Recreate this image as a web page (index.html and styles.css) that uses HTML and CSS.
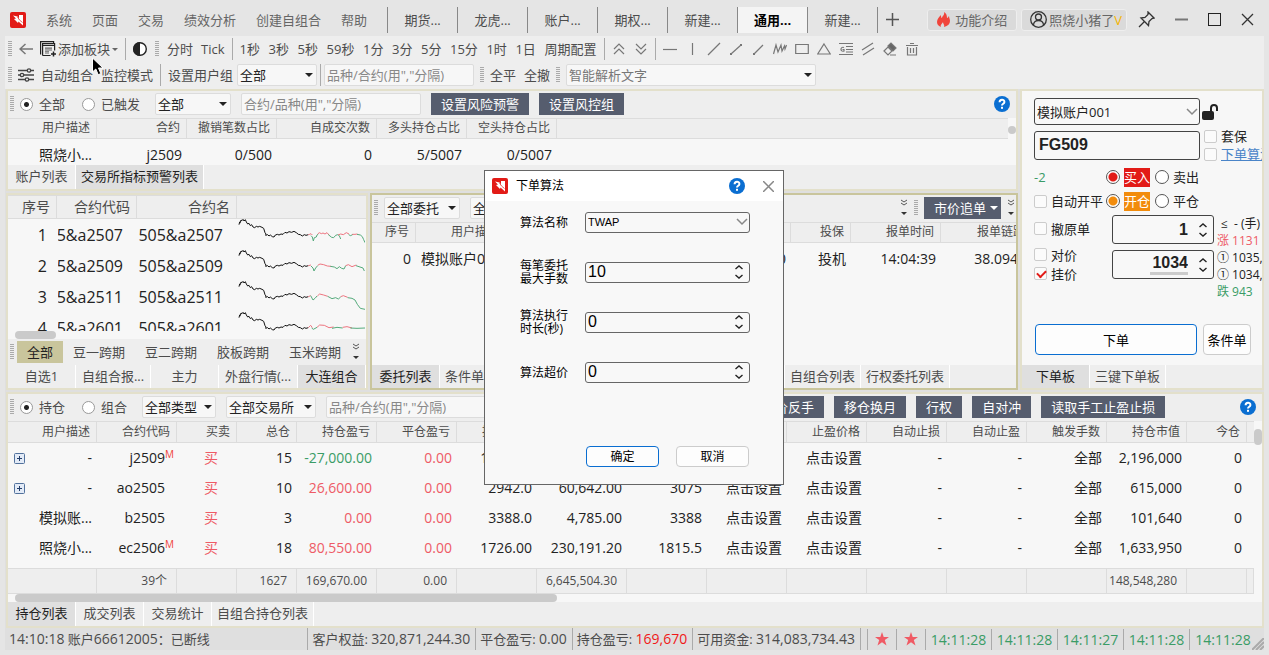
FILE: index.html
```html
<!DOCTYPE html>
<html lang="zh-CN">
<head>
<meta charset="utf-8">
<title>通用交易</title>
<link rel="stylesheet" href="styles.css">
</head>
<body>
<svg class="defs" aria-hidden="true">
  <symbol id="logo" viewBox="0 0 16 16"><rect width="16" height="16" rx="2" fill="#e21b17"/><path d="M3 3.500l4.500 1L9 6.500V3h4v10.500L8.500 9.500l-.500 1.500L4 7l2-.500z" fill="#fff"/><path d="M7.500 5l2 3 3 2.500" stroke="#e21b17" stroke-width=".7" fill="none"/></symbol>
  <symbol id="help" viewBox="0 0 16 16"><circle cx="8" cy="8" r="8" fill="#0a6ed1"/><path d="M5.600 6.200C5.600 3 10.400 3 10.400 5.900c0 2-2.400 1.800-2.400 3.700" fill="none" stroke="#fff" stroke-width="2"/><rect x="7" y="10.800" width="2" height="2" fill="#fff"/></symbol>
  <symbol id="more" viewBox="0 0 8 18"><path d="M1 1l3 2 3-2M1 4l3 2 3-2" fill="none" stroke="#555" stroke-width="1"/><path d="M1 13h6l-3 3z" fill="#333"/></symbol>
  <symbol id="chev" viewBox="0 0 12 8"><path d="M1 1l5 5 5-5" fill="none" stroke="#888" stroke-width="1.500"/></symbol>
  <symbol id="steps" viewBox="0 0 10 14"><path d="M1.500 4L5 1l3.500 3M1.500 10L5 13l3.500-3" fill="none" stroke="#222" stroke-width="1.400"/></symbol>
  <symbol id="plus" viewBox="0 0 11 11"><rect x=".5" y=".5" width="10" height="10" rx="1" fill="#e3ebf7" stroke="#51719c"/><path d="M3 5.500h5M5.500 3v5" stroke="#243f6b"/></symbol>
  <symbol id="star" viewBox="0 0 14 14"><path d="M7 0l1.700 5H14L9.800 8.100l1.700 5.300L7 10.300l-4.500 3.100 1.700-5.300L0 5h5.300z" fill="#f05a64"/></symbol>
  <symbol id="trend" viewBox="0 0 384 93"><polyline points="6,17 8,9 10,11 12,3 15,5 18,1 21,6 25,2 28,9 32,15 36,13 40,20 44,17 48,24 53,26 58,22 63,24 68,22 75,25 80,28 84,41 87,45 86,49 92,47 96,51 100,48 106,53 111,54 115,48 121,46 126,48 132,45 138,46 144,40 150,42 156,38 164,40 171,37 178,41 184,46 190,47 196,51 202,47 207,49 214,47" fill="none" stroke="#111" stroke-width="3"/></symbol>
</svg>

<header class="titlebar">
  <svg class="i16 logo"><use href="#logo"/></svg>
  <nav class="menu"><a href="#">系统</a><a href="#">页面</a><a href="#">交易</a><a href="#">绩效分析</a><a href="#">创建自组合</a><a href="#">帮助</a></nav>
  <nav class="pages"><a href="#">期货...</a><a href="#">龙虎...</a><a href="#">账户...</a><a href="#">期权...</a><a href="#">新建...</a><a href="#" class="on">通用...</a><a href="#">新建...</a></nav>
  <button class="icon add" aria-label="添加页面"><svg width="13" height="13"><path d="M0 6.500h13M6.500 0v13" stroke="#555" stroke-width="1.500"/></svg></button>
  <div class="window-tools">
    <button class="pill"><svg width="13" height="15" viewBox="0 0 13 15"><path d="M7 0c1 3-2 4-2 6C4 6 4 4 4 3 2 5 0 7 0 10c0 3 2 4 4 5-1-2 1-3 2-5 0 2 2 3 1 5 4-1 6-3 6-6 0-2-1-3-1-5-1 1-1 2-2 2 0-3-1-5-3-6z" fill="#f0443a"/></svg>功能介绍</button>
    <button class="pill user"><svg width="17" height="17" viewBox="0 0 17 17" fill="none" stroke="#333" stroke-width="1.300"><circle cx="8.500" cy="8.500" r="7.800"/><circle cx="8.500" cy="6" r="3"/><path d="M3.500 14c0-6 10-6 10 0"/></svg>照烧小猪了<b>V</b></button>
    <button class="icon" aria-label="固定"><svg width="17" height="17" viewBox="0 0 17 17" fill="none" stroke="#333" stroke-width="1.300"><path d="M10 1l6 6-2 .500-3 3-.500 4-7.500-7.500L7 6.500l3-3zM6.500 10.500L1 16"/></svg></button>
    <button class="icon" aria-label="最小化"><svg width="13" height="13"><path d="M0 6.500h13" stroke="#777" stroke-width="2"/></svg></button>
    <button class="icon" aria-label="最大化"><svg width="13" height="13"><rect x=".5" y=".5" width="12" height="12" fill="none" stroke="#222"/></svg></button>
    <button class="icon" aria-label="关闭"><svg width="13" height="13"><path d="M1 1l11 11M12 1L1 12" stroke="#333" stroke-width="1.300"/></svg></button>
  </div>
</header>

<main class="workspace">
  <div class="bar top">
    <i class="grip"></i>
    <button class="icon back" aria-label="后退"><svg width="14" height="12"><path d="M14 6H1M6.500 1L1 6l5.500 5" fill="none" stroke="#777" stroke-width="1.500"/></svg></button>
    <button class="tool block"><svg width="16" height="16" viewBox="0 0 16 16" fill="none" stroke="#222"><path d="M5 6h7v4H9v3H5z" fill="#aaa" stroke="none"/><path d="M.6 13.500V.600h13v2M2.600 14.500V2.600h12v7M2.600 4.500h12M2.600 14.500h8" stroke-width="1.200"/><path d="M5 7.500h7M5 10.500h4" stroke="#888"/><path d="M13.500 10.500v5M11 13h5" stroke-width="1.500"/></svg>添加板块<i class="caret small"></i></button>
    <i class="sep"></i>
    <button class="icon contrast" aria-label="主题"><svg width="14" height="14"><circle cx="7" cy="7" r="6.300" fill="#fff" stroke="#222" stroke-width="1.400"/><path d="M7 0a7 7 0 0 0 0 14z" fill="#222"/></svg></button>
    <i class="grip"></i>
    <button class="tool">分时</button><button class="tool">Tick</button>
    <i class="sep"></i>
    <div class="times"><button>1秒</button><button>3秒</button><button>5秒</button><button>59秒</button><button>1分</button><button>3分</button><button>5分</button><button>15分</button><button>1时</button><button>1日</button><button>周期配置</button></div>
    <i class="sep"></i>
    <div class="draws">
      <button class="icon" aria-label="上移"><svg width="14" height="14" viewBox="0 0 14 14"><path d="M2 7l5-5 5 5M2 12l5-5 5 5"/></svg></button>
      <button class="icon" aria-label="下移"><svg width="14" height="14" viewBox="0 0 14 14"><path d="M2 2l5 5 5-5M2 7l5 5 5-5"/></svg></button>
    </div>
    <i class="sep"></i>
    <div class="draws">
      <button class="icon" aria-label="水平线"><svg width="14" height="14" viewBox="0 0 14 14"><path d="M0 7.500h14"/></svg></button>
      <button class="icon" aria-label="垂直线"><svg width="14" height="14" viewBox="0 0 14 14"><path d="M7.500 1v12"/></svg></button>
      <button class="icon" aria-label="直线"><svg width="14" height="14" viewBox="0 0 14 14"><path d="M1 13L13 1"/></svg></button>
      <button class="icon" aria-label="线段"><svg width="14" height="14" viewBox="0 0 14 14"><path d="M2 12L12 3"/><path d="M1 12h2M11 3h2" stroke-width="2"/></svg></button>
      <button class="icon" aria-label="射线"><svg width="14" height="14" viewBox="0 0 14 14"><path d="M3 12l9-9"/><path d="M2 12h2" stroke-width="2"/></svg></button>
      <button class="icon" aria-label="波浪线"><svg width="14" height="14" viewBox="0 0 14 14"><path d="M.5 12L3 3l2 7 3-7 1 6 2.500-5 .500 3 1.500-4"/></svg></button>
      <button class="icon" aria-label="矩形"><svg width="14" height="14" viewBox="0 0 14 14"><path d="M.7 2.500h12.600v9H.700z"/></svg></button>
      <button class="icon" aria-label="三角形"><svg width="14" height="14" viewBox="0 0 14 14"><path d="M7 2l6.300 10H.700z"/></svg></button>
      <button class="icon" aria-label="黄金分割"><svg width="14" height="14" viewBox="0 0 14 14"><path d="M0 1.500h14M7 4.500h7M7 7.500h7M7 10h7M0 12.500h14M5 5.500C1 4 1 10.500 5 9V7.500H3.500"/></svg></button>
      <button class="icon" aria-label="平行线"><svg width="14" height="14" viewBox="0 0 14 14"><path d="M1 8L12 1M2 13L13 6"/></svg></button>
      <button class="icon" aria-label="橡皮"><svg width="14" height="14" viewBox="0 0 14 14"><path d="M1 9l4-4 4 4-4 4zM7 13h6"/><path d="M5 4l3-3 5 5-3 3z" fill="#666"/></svg></button>
      <button class="icon" aria-label="删除"><svg width="14" height="14" viewBox="0 0 14 14"><path d="M1 3.500h12M5 1.500h4M2.500 5v8h9V5M5.500 6v5M8.500 6v5"/></svg></button>
    </div>
  </div>
  <div class="bar second">
    <i class="grip"></i>
    <button class="tool slid"><svg width="16" height="14" viewBox="0 0 16 14" fill="#eee" stroke="#444" stroke-width="1.300"><path d="M0 2.500h16M0 7h16M0 11.500h16"/><circle cx="11" cy="2.500" r="1.700"/><circle cx="4" cy="7" r="1.700"/><circle cx="9" cy="11.500" r="1.700"/></svg>自动组合</button>
    <button class="tool">监控模式</button>
    <i class="sep"></i>
    <label class="tool" for="group">设置用户组</label>
    <span class="drop w80"><select id="group"><option>全部</option></select></span>
    <i class="sep tight"></i>
    <input class="field w150" aria-label="品种筛选" placeholder='品种/合约(用","分隔)'>
    <i class="grip mid"></i>
    <button class="tool">全平</button><button class="tool">全撤</button>
    <i class="grip mid"></i>
    <span class="drop w250 dim"><select aria-label="智能解析"><option>智能解析文字</option></select></span>
  </div>

  <div class="docks">
    <div class="left">
      <section class="panel">
        <div class="bar">
          <i class="grip"></i>
          <label class="choice"><input type="radio" name="warn" checked>全部</label>
          <label class="choice"><input type="radio" name="warn">已触发</label>
          <span class="drop w76"><select aria-label="范围"><option>全部</option></select></span>
          <input class="field w180" aria-label="合约筛选" placeholder='合约/品种(用","分隔)'>
          <button class="dark">设置风险预警</button><button class="dark">设置风控组</button>
          <button class="icon end" aria-label="帮助"><svg class="i16"><use href="#help"/></svg></button>
        </div>
        <div class="scroll-y">
          <table class="grid warn">
            <colgroup><col class="c89"><col class="c90"><col class="c90"><col class="c100"><col class="c90"><col class="c90"><col></colgroup>
            <thead><tr><th>用户描述</th><th>合约</th><th>撤销笔数占比</th><th>自成交次数</th><th>多头持仓占比</th><th>空头持仓占比</th><th></th></tr></thead>
            <tbody><tr><td>照烧小...</td><td>j2509</td><td>0/500</td><td>0</td><td>5/5007</td><td>0/5007</td><td></td></tr></tbody>
          </table>
          <div class="track"><i class="dot"></i></div>
        </div>
        <nav class="tabs"><a href="#">账户列表</a><a href="#" class="on">交易所指标预警列表</a></nav>
      </section>

      <div class="pair">
        <section class="panel quotes">
          <div class="quote-view">
          <table class="grid big">
            <colgroup><col class="c49"><col class="c80"><col class="c100"><col></colgroup>
            <thead><tr><th>序号</th><th>合约代码</th><th>合约名</th><th></th></tr></thead>
            <tbody>
              <tr><td>1</td><td><div class="clip">5&amp;a2507</div></td><td>505&amp;a2507</td><td class="chart"><svg viewBox="0 0 384 93"><use href="#trend"/><polyline class="r" points="214,47 218,46 222,44 226,48"/><polyline class="g" points="222,50 226,54 229,66 232,56 238,54 240,48 244,45"/><polyline class="r" points="242,45 247,41 253,44 258,42 264,45 270,41 276,48"/><polyline class="g" points="274,47 279,51 284,55 290,56 296,49 302,47 307,50 311,60"/><polyline class="r" points="303,48 311,45 319,47 328,41 336,45"/><polyline class="g" points="335,47 341,50 348,46"/><polyline class="r" points="346,46 354,46 361,45"/><polyline class="g" points="360,46 370,48 376,53 380,62 384,71"/></svg></td></tr>
              <tr><td>2</td><td><div class="clip">5&amp;a2509</div></td><td>505&amp;a2509</td><td class="chart"><svg viewBox="0 0 384 93"><use href="#trend"/><polyline class="r" points="214,47 222,45"/><polyline class="g" points="222,48 228,54 231,63 236,54 242,47"/><polyline class="r" points="242,46 249,42 260,44 271,48 282,49"/><polyline class="g" points="280,49 292,51 300,56 307,50 314,55 321,57 326,47"/><polyline class="r" points="326,47 334,44 345,50 358,45"/><polyline class="g" points="357,47 369,51 378,54 382,63"/></svg></td></tr>
              <tr><td>3</td><td><div class="clip">5&amp;a2511</div></td><td>505&amp;a2511</td><td class="chart"><svg viewBox="0 0 384 93"><use href="#trend"/><polyline class="r" points="214,47 221,44"/><polyline class="g" points="221,44 228,57 234,52 240,45"/><polyline class="r" points="241,45 248,39 260,42 272,46"/><polyline class="g" points="272,46 285,53 296,50 304,54 311,48"/><polyline class="r" points="311,47 319,44 332,49"/><polyline class="g" points="332,50 345,52 354,57 361,70 370,82 384,85"/></svg></td></tr>
              <tr><td>4</td><td><div class="clip">5&amp;a2601</div></td><td>505&amp;a2601</td><td class="chart"><svg viewBox="0 0 384 93"><use href="#trend"/><polyline class="r" points="214,47 221,40 226,47"/><polyline class="g" points="224,48 229,52 240,46"/><polyline class="r" points="240,46 248,39 262,40 276,47 290,45"/><polyline class="g" points="285,49 300,46 317,48"/><polyline class="r" points="317,46 330,44 345,48"/><polyline class="g" points="340,48 360,49 384,48"/></svg></td></tr>
            </tbody>
          </table>
          </div>
          <div class="hscroll"><i class="short"></i></div>
          <div class="bar cats"><i class="grip"></i><button class="cat on">全部</button><button class="cat">豆一跨期</button><button class="cat">豆二跨期</button><button class="cat">胶板跨期</button><button class="cat">玉米跨期</button><svg class="more end"><use href="#more"/></svg></div>
          <nav class="tabs wide"><a href="#">自选1</a><a href="#">自组合报...</a><a href="#">主力</a><a href="#">外盘行情(...</a><a href="#" class="on">大连组合</a></nav>
        </section>

        <section class="panel active">
          <div class="bar">
            <i class="grip"></i>
            <span class="drop w76"><select aria-label="委托"><option>全部委托</option></select></span>
            <span class="drop w76"><select aria-label="类型"><option>全部类型</option></select></span>
            <svg class="more end"><use href="#more"/></svg>
            <i class="grip"></i>
            <button class="dark split">市价追单<i class="caret"></i></button>
            <svg class="more"><use href="#more"/></svg>
          </div>
          <div class="order-view">
          <table class="grid orders">
            <colgroup><col class="c44"><col class="c90"><col class="c80"><col class="c60"><col class="c60"><col class="c85"><col class="c60"><col class="c90"><col class="c90"></colgroup>
            <thead><tr><th>序号</th><th>用户描述</th><th>合约</th><th>买卖</th><th>开平</th><th>报单价格</th><th>投保</th><th>报单时间</th><th>报单链路</th></tr></thead>
            <tbody><tr><td>0</td><td>模拟账户001</td><td>FG509</td><td>买</td><td>开仓</td><td>1034.00</td><td>投机</td><td>14:04:39</td><td>38.0947</td></tr></tbody>
          </table>
          </div>
          <nav class="tabs"><a href="#" class="on">委托列表</a><a href="#">条件单列表</a><a href="#">止盈止损触发单列表</a><a href="#">套利与互换委托单列表</a><a href="#">自组合列表</a><a href="#">行权委托列表</a></nav>
        </section>
      </div>
    </div>

    <section class="panel trade">
      <form class="ticket">
        <div class="line first">
          <span class="box acct"><select aria-label="账户"><option>模拟账户001</option></select><svg class="chev"><use href="#chev"/></svg></span>
          <svg width="17" height="16" viewBox="0 0 17 16"><rect y="7" width="12" height="9" rx="2" fill="#222"/><path d="M9 8V4c0-4 6-4 6 0v3" fill="none" stroke="#222" stroke-width="2"/></svg>
        </div>
        <div class="line code">
          <input class="box symbol" aria-label="合约" value="FG509">
          <div class="stack"><label><input type="checkbox">套保</label><label><input type="checkbox"><a href="#">下单算法</a></label></div>
        </div>
        <div class="line sides"><span class="net">-2</span><label><input type="radio" name="side" class="red" checked><mark class="buy">买入</mark></label><label><input type="radio" name="side">卖出</label></div>
        <div class="line sides"><label class="auto"><input type="checkbox">自动开平</label><label><input type="radio" name="off" class="orange" checked><mark class="open">开仓</mark></label><label><input type="radio" name="off">平仓</label></div>
        <div class="entry">
          <div class="opts"><label class="lone"><input type="checkbox">撤原单</label><label><input type="checkbox">对价</label><label><input type="checkbox" checked>挂价</label></div>
          <div class="nums">
            <span class="box num"><input type="number" aria-label="手数" value="1"><svg class="steps"><use href="#steps"/></svg></span>
            <span class="box num"><input type="number" class="marked" aria-label="价格" value="1034"><svg class="steps"><use href="#steps"/></svg></span>
          </div>
          <div class="hints"><span class="first-hint">≤&nbsp; - (手)</span><span class="up">涨 1131</span><span>① 1035,25</span><span>① 1034,18</span><span class="down">跌 943</span></div>
        </div>
        <div class="line actions"><button type="button" class="push main">下单</button><button type="button" class="push">条件单</button></div>
      </form>
      <nav class="tabs"><a href="#" class="on">下单板</a><a href="#">三键下单板</a></nav>
    </section>
  </div>

  <section class="panel positions">
    <div class="bar">
      <i class="grip"></i>
      <label class="choice"><input type="radio" name="pos" checked>持仓</label>
      <label class="choice"><input type="radio" name="pos">组合</label>
      <span class="drop w74"><select aria-label="类型"><option>全部类型</option></select></span>
      <span class="drop w90"><select aria-label="交易所"><option>全部交易所</option></select></span>
      <input class="field w170" aria-label="持仓筛选" placeholder='品种/合约(用","分隔)'>
      <button class="dark">对价平仓</button><button class="dark">市价平仓</button><button class="dark">对价反手</button><button class="dark">市价反手</button><button class="dark">移仓换月</button><button class="dark">行权</button><button class="dark">自对冲</button><button class="dark">读取手工止盈止损</button>
      <button class="icon end" aria-label="帮助"><svg class="i16"><use href="#help"/></svg></button>
    </div>
    <div class="scroll-y">
      <table class="grid pos">
        <colgroup><col class="c89"><col class="c80"><col class="c60"><col class="c60"><col class="c80"><col class="c80"><col class="c80"><col class="c90"><col class="c80"><col class="c80"><col class="c80"><col class="c80"><col class="c80"><col class="c80"><col class="c80"><col class="c60"><col></colgroup>
        <thead><tr><th>用户描述</th><th>合约代码</th><th>买卖</th><th>总仓</th><th>持仓盈亏</th><th>平仓盈亏</th><th>持仓均价</th><th>保证金</th><th>最新价</th><th>止损价格</th><th>止盈价格</th><th>自动止损</th><th>自动止盈</th><th>触发手数</th><th>持仓市值</th><th>今仓</th><th></th></tr></thead>
        <tbody>
          <tr><td><div class="tree"><svg class="i11"><use href="#plus"/></svg>-</div></td><td class="sym">j2509<sup>M</sup></td><td class="up mid">买</td><td>15</td><td class="down">-27,000.00</td><td class="up">0.00</td><td>1482.00</td><td>32,940.00</td><td>1464</td><td>点击设置</td><td>点击设置</td><td>-</td><td>-</td><td>全部</td><td>2,196,000</td><td>0</td><td></td></tr>
          <tr><td><div class="tree"><svg class="i11"><use href="#plus"/></svg>-</div></td><td class="sym">ao2505<sup></sup></td><td class="up mid">买</td><td>10</td><td class="up">26,600.00</td><td class="up">0.00</td><td>2942.0</td><td>60,642.00</td><td>3075</td><td>点击设置</td><td>点击设置</td><td>-</td><td>-</td><td>全部</td><td>615,000</td><td>0</td><td></td></tr>
          <tr><td>模拟账...</td><td class="sym">b2505<sup></sup></td><td class="up mid">买</td><td>3</td><td class="up">0.00</td><td class="up">0.00</td><td>3388.0</td><td>4,785.00</td><td>3388</td><td>点击设置</td><td>点击设置</td><td>-</td><td>-</td><td>全部</td><td>101,640</td><td>0</td><td></td></tr>
          <tr><td>照烧小...</td><td class="sym">ec2506<sup>M</sup></td><td class="up mid">买</td><td>18</td><td class="up">80,550.00</td><td class="up">0.00</td><td>1726.00</td><td>230,191.20</td><td>1815.5</td><td>点击设置</td><td>点击设置</td><td>-</td><td>-</td><td>全部</td><td>1,633,950</td><td>0</td><td></td></tr>
          <tr class="pad"><td colspan="17"></td></tr>
        </tbody>
        <tfoot><tr><td></td><td>39个</td><td></td><td>1627</td><td>169,670.00</td><td>0.00</td><td></td><td>6,645,504.30</td><td></td><td></td><td></td><td></td><td></td><td></td><td>148,548,280</td><td></td><td></td></tr></tfoot>
      </table>
      <div class="track"><i></i></div>
    </div>
    <div class="hscroll"><i></i></div>
    <nav class="tabs"><a href="#" class="on">持仓列表</a><a href="#">成交列表</a><a href="#">交易统计</a><a href="#">自组合持仓列表</a></nav>
  </section>

  <footer class="status">
    <span class="grow"><b>14:10:18</b> 账户<b>66612005</b>：已断线</span>
    <span>客户权益: <b>320,871,244.30</b></span>
    <span>平仓盈亏: <b>0.00</b></span>
    <span>持仓盈亏: <b class="hot">169,670</b></span>
    <span>可用资金: <b>314,083,734.43</b></span>
    <span class="nil"></span>
    <span class="fav"><svg class="i14"><use href="#star"/></svg></span>
    <span class="fav"><svg class="i14"><use href="#star"/></svg></span>
    <span class="clock">14:11:28</span><span class="clock">14:11:28</span><span class="clock">14:11:27</span><span class="clock">14:11:28</span><span class="clock">14:11:28</span>
    <svg class="resize" width="12" height="12"><path d="M0 12L12 0M4 12l8-8M8 12l4-4" stroke="#aaa" stroke-width="2"/></svg>
  </footer>
</main>

<dialog open class="algo" aria-label="下单算法">
  <div class="dlg-head"><svg class="i16"><use href="#logo"/></svg><h1>下单算法</h1><button class="icon" aria-label="帮助"><svg class="i16"><use href="#help"/></svg></button><button class="icon" aria-label="关闭"><svg width="11" height="11"><path d="M0 0l11 11M11 0L0 11" stroke="#888" stroke-width="1.500"/></svg></button></div>
  <form class="dlg-body">
    <label for="a1">算法名称</label><span class="box thin"><select id="a1"><option>TWAP</option></select><svg class="chev"><use href="#chev"/></svg></span>
    <label for="a2">每笔委托最大手数</label><span class="box thin"><input type="number" id="a2" value="10"><svg class="steps"><use href="#steps"/></svg></span>
    <label for="a3">算法执行时长(秒)</label><span class="box thin"><input type="number" id="a3" value="0"><svg class="steps"><use href="#steps"/></svg></span>
    <label for="a4">算法超价</label><span class="box thin"><input type="number" id="a4" value="0"><svg class="steps"><use href="#steps"/></svg></span>
  </form>
  <div class="dlg-foot"><button class="push main">确定</button><button class="push">取消</button></div>
</dialog>
<svg class="pointer" width="12" height="19" viewBox="0 0 12 19"><path d="M.5 1v14l3.300-3 2.400 5.700 2.600-1.100L6.500 11H11z" fill="#000" stroke="#fff"/></svg>
</body>
</html>
```
FILE: styles.css
```css
* { box-sizing: border-box; }
body {
  margin: 0;
  min-height: 100vh;
  padding: 0 5px 5px;
  display: flex;
  flex-direction: column;
  background: #e5e5e5;
  color: #4c4c4c;
  font: 13px/18px "Open Sans", "Noto Sans", "Noto Sans CJK SC", sans-serif;
  overflow: hidden;
}
a { color: inherit; text-decoration: none; white-space: nowrap; }
button, input, select { font: inherit; color: inherit; margin: 0; }
button { border: 0; background: none; padding: 0; white-space: nowrap; flex: none; }
svg { display: block; flex: none; }
.defs { position: absolute; width: 0; height: 0; }
.i16 { width: 16px; height: 16px; }
.i14 { width: 14px; height: 14px; }
.i11 { width: 11px; height: 11px; }
.icon { display: flex; align-items: center; justify-content: center; }
.end { margin-left: auto; }

/* title bar */
.titlebar { display: flex; align-items: center; height: 36px; padding-top: 3px; }
.logo { margin: 0 20px 0 5px; }
.menu { display: flex; gap: 20px; margin-right: 20px; color: #666; }
.pages { display: flex; border-left: 1px solid #888; }
.pages a { width: 70px; height: 26px; line-height: 26px; text-align: center; border-right: 1px solid #888; }
.pages .on { background: #f4f4f4; color: #000; font-weight: bold; }
.add { margin-left: 8px; }
.window-tools { display: flex; align-items: center; gap: 20px; margin-left: auto; padding-right: 10px; }
.pill { display: flex; align-items: center; gap: 5px; height: 22px; padding: 0 9px; background: #dadada; border: 1px solid #eee; border-radius: 3px; color: #666; }
.user { margin-left: -16px; margin-right: -9px; padding: 0 4px 0 8px; gap: 2px; }
.user b { color: #f5b400; font-weight: normal; margin-left: -2px; }

/* tool bars */
.workspace { flex: 1; display: flex; flex-direction: column; background: #dfdfdf; }
.bar { display: flex; align-items: center; gap: 10px; height: 27px; padding: 0 6px 1px 2px; background: #eee; }
.bar.top { gap: 8px; height: 26px; padding: 0 6px 0 3px; }
.bar.second { gap: 8px; padding-left: 3px; }
.grip { flex: none; width: 4px; height: 16px; background: repeating-linear-gradient(#aaa 0 1px, transparent 1px 2px); }
.sep { flex: none; width: 1px; height: 22px; margin: 0 -1px; background: #aaa; }
.tight { margin: 0 -5px; }
.mid { margin: 0 -2px; }
.back { width: 14px; margin-left: -1px; }
.tool, .block, .slid { display: flex; align-items: center; gap: 8px; white-space: nowrap; }
.block { gap: 2px; margin-left: -1px; }
.slid { gap: 7px; margin-left: -2px; }
.times { flex: none; display: flex; justify-content: space-between; width: 357px; }
.caret { border: 4px solid transparent; border-top-color: #222; border-bottom: 0; }
.caret.small { border-width: 3px 3px 0; border-top-color: #666; }
.draws { display: flex; gap: 8px; }
.draws svg { fill: none; stroke: #777; stroke-width: 1.200; }
.drop { position: relative; flex: none; height: 22px; }
.drop::after { content: ""; position: absolute; right: 4px; top: 9px; border: 4px solid transparent; border-top-color: #222; border-bottom: 0; pointer-events: none; }
.drop select, .field { appearance: none; width: 100%; height: 22px; padding: 0 2px; background: #f7f7f7; border: 1px solid #dcdcdc; border-radius: 2px; color: #222; }
.second .drop { margin-left: -4px; }
.second .dim { margin-left: 0; }
.dim select { color: #777; }
.field { flex: none; }
.field::placeholder { color: #888; }
.w74 { width: 74px; } .w76 { width: 76px; } .w80 { width: 80px; } .w90 { width: 90px; }
.bar .w150 { width: 150px; } .bar .w180 { width: 180px; } .bar .w170 { width: 170px; } .w250 { width: 250px; }
.dark { height: 22px; padding: 0 10px; background: #565d6e; color: #fff; }
.active .bar { gap: 6px; padding-right: 1px; }
.active .drop + .drop { margin-left: 4px; }
.split { display: flex; align-items: center; gap: 4px; padding-right: 3px; }
.split .caret { border-top-color: #fff; }
.more { width: 8px; height: 18px; }
.choice { display: flex; align-items: center; gap: 6px; margin-right: 5px; white-space: nowrap; }
.choice + .choice { margin-left: 2px; }
.bar .grip + .choice { margin-left: -4px; }
input[type="radio"] { appearance: none; flex: none; width: 13px; height: 13px; border: 1px solid #999; border-radius: 50%; background: #fff; }
input[type="radio"]:checked { background: radial-gradient(#222 0 2px, #fff 3px); }
input[type="checkbox"] { appearance: none; flex: none; width: 13px; height: 13px; border: 1px solid #ccc; border-radius: 2px; background: #fbfbfb; }
input[type="checkbox"]:checked::before { content: ""; display: block; width: 7px; height: 4px; margin: 2px 0 0 2px; border: solid #e21b17; border-width: 0 0 2px 2px; transform: rotate(-45deg); }

/* docked panels */
.docks { display: grid; grid-template-columns: minmax(0, 1fr) 244px; gap: 2px; }
.left { display: grid; gap: 2px; min-width: 0; }
.pair { display: grid; grid-template-columns: 362px minmax(0, 1fr); gap: 2px; }
.panel { display: flex; flex-direction: column; min-width: 0; overflow: hidden; background: #f7f7f7; border: 2px solid #e3e0cb; }
.panel.active { border-color: #c9c59c; }
.docks, .positions { margin-left: 1px; }
.positions { margin-top: 2px; }
.tabs { display: flex; height: 24px; margin-top: auto; background: #eee; overflow: hidden; }
.tabs a { flex: none; min-width: 68px; padding: 0 5px; line-height: 23px; text-align: center; border-right: 1px solid #fff; }
.tabs .on { background: #dfdfdf; color: #222; }
.pair .tabs, .trade .tabs { height: 23px; }
.wide a { flex: 1 1 auto; }

/* tables */
.grid { width: 100%; table-layout: fixed; border-collapse: separate; border-spacing: 0; font-size: 14px; color: #222; }
.grid th { height: 21px; padding: 0 6px 1px 0; font-size: 12px; line-height: 16px; font-weight: normal; color: #4c4c4c; text-align: right; background: #eee; border: solid #dcdcdc; border-width: 1px 1px 1px 0; white-space: nowrap; }
.grid td { height: 30px; padding: 0 5px 0 0; text-align: right; white-space: nowrap; line-height: 20px; }
.grid th:last-child { border-right: 0; }
.warn td { height: 26px; padding-top: 6px; }
.pos th { height: 22px; }
.c44 { width: 44px; } .c49 { width: 49px; } .c60 { width: 60px; } .c80 { width: 80px; } .c85 { width: 85px; }
.c89 { width: 89px; } .c90 { width: 90px; } .c100 { width: 100px; }
.pos .pad td { height: 5px; line-height: 1px; }
.pos tfoot td { height: 26px; padding-right: 9px; font-size: 12px; color: #4c4c4c; background: #eee; border: solid #dcdcdc; border-width: 1px 1px 1px 0; }
.pos .sym { padding-right: 3px; }
.sym sup { display: inline-block; width: 9px; font-size: 10px; line-height: 10px; color: #f0443a; vertical-align: 5px; text-align: left; }
.pos .mid { padding-right: 19px; }
.grid .up, .up { color: #ee5b66; }
.grid .down, .down { color: #3a9c66; }
.tree { display: flex; align-items: center; justify-content: space-between; padding-left: 6px; }
.scroll-y { display: grid; grid-template-columns: minmax(0, 1fr) 8px; }
.track { background: #f7f7f7; padding-top: 8px; }
.track i { display: block; height: 16px; border-radius: 4px; background: #cacaca; }
.track .dot { height: 8px; }
.hscroll { height: 8px; padding-left: 7px; }
.hscroll i { display: block; width: 43.500%; height: 8px; border-radius: 4px; background: #cacaca; }
.hscroll .short { width: 41px; }
.quote-view { height: 136px; overflow: hidden; }
.big th { height: 24px; font-size: 14px; }
.big td { height: 31px; font-size: 16px; padding-right: 14px; }
.big td:first-child { padding-right: 10px; }
.clip { display: flex; justify-content: flex-end; margin-left: 1px; overflow: hidden; }
.grid .chart { padding: 0; }
.chart svg { width: 128px; height: 31px; }
.chart polyline { fill: none; stroke-width: 3; }
.r { stroke: #ee7580; } .g { stroke: #55ab7c; }
.cats { height: 26px; gap: 0; }
.cat { height: 22px; padding: 0 10px; }
.cats .grip { margin-right: 3px; }
.cats .on { background: #c9c59c; color: #222; }
.orders { width: 659px; }
.orders td { height: 32px; }
.order-view { overflow: hidden; }

/* order ticket */
.ticket { display: flex; flex-direction: column; padding: 7px 0 0 12px; color: #222; }
.line, .line label, .opts label, .stack label { display: flex; align-items: center; white-space: nowrap; }
.line label, .opts label, .stack label { gap: 4px; }
.box { display: flex; align-items: center; border: 1px solid #444; border-radius: 3px; background: #f8f8f8; }
.box select, .box input { appearance: none; flex: 1; min-width: 0; width: 0; border: 0; background: none; padding: 0 2px; outline: 0; }
input[type="number"] { appearance: textfield; -moz-appearance: textfield; }
input::-webkit-inner-spin-button { display: none; }
.chev { width: 12px; height: 8px; margin-right: 1px; }
.steps { width: 10px; height: 14px; margin-right: 5px; }
.first { gap: 2px; }
.acct { width: 166px; height: 27px; }
.code { gap: 4px; margin-top: 2px; }
.symbol { width: 166px; height: 29px; padding: 0 4px; font: bold 16px "Liberation Sans", Arial, sans-serif; }
.stack label { height: 18px; }
.stack a { color: #4a84c8; text-decoration: underline; }
.sides { height: 24px; gap: 5px; }
.code + .sides { margin-top: 2px; }
.net, .auto { width: 67px; color: #3a9c66; }
.line .auto { color: #222; }
.sides input[type="radio"] { width: 14px; height: 14px; border-color: #555; }
.sides .red:checked { background: radial-gradient(#e21b17 0 4px, #fff 5px); }
.sides .orange:checked { background: radial-gradient(#f28c0c 0 4px, #fff 5px); }
mark { color: #fff; line-height: 19px; }
.buy { background: #e21b17; }
.open { background: #f28c0c; }
.entry { display: grid; grid-template-columns: 78px 102px 1fr; margin-top: 2px; }
.opts label { height: 19px; }
.opts .lone { height: 27px; margin-bottom: 3px; }
.nums { display: flex; flex-direction: column; gap: 6px; }
.num { height: 29px; }
.box.num input { padding: 0; margin-right: 10px; text-align: right; font: bold 16px "Liberation Sans", Arial, sans-serif; }
.box.num .marked { flex: none; width: 38px; margin-left: auto; border-bottom: 3px solid #ccc; }
.hints { display: flex; flex-direction: column; padding-left: 3px; white-space: nowrap; overflow: hidden; }
.hints span { font-size: 12px; line-height: 17px; }
.hints .first-hint { padding-left: 4px; }
.actions { gap: 6px; margin: 24px 0 10px 1px; }
.push { height: 31px; background: #fdfdfd; border: 1px solid #ccc; border-radius: 4px; color: #000; padding: 0 3px; }
.push.main { border-color: #0a6ed1; }
.actions .main { width: 162px; }
.actions .push:last-child { width: 48px; }

/* status bar */
.status { display: flex; align-items: center; height: 22px; position: relative; }
.status span { padding: 0 5px 0 4px; border-right: 1px solid #aaa; line-height: 21px; white-space: nowrap; }
.status b { font-weight: normal; font-size: 14px; }
.status .hot { color: #f01818; }
.status .grow { flex: 1; }
.status .nil { padding: 0 3px; height: 21px; }
.status .fav { width: 29px; height: 21px; display: flex; align-items: center; justify-content: center; padding: 0; }
.status .clock { width: 66px; padding: 0; text-align: center; font-size: 14px; color: #3a9c66; }
.status .clock:nth-last-child(2) { width: 74px; padding-right: 8px; border-right: 0; }
.status .resize { position: absolute; right: 0; bottom: 0; }

/* order algorithm dialog */
.algo { position: fixed; inset: 0 1px 0 0; margin: auto; width: 300px; height: 315px; padding: 0; border: 1px solid #666; background: #f8f8f8; color: #000; font-size: 12px; }
.dlg-head { display: flex; align-items: center; gap: 8px; height: 30px; padding: 0 9px 0 7px; background: #fff; }
.dlg-head h1 { margin: 0 auto 0 0; font-size: 12px; font-weight: normal; }
.dlg-head .icon { margin-left: 10px; }
.dlg-body { display: grid; grid-template-columns: 48px 165px; grid-auto-rows: 50px; column-gap: 17px; align-items: center; padding: 0 0 0 35px; margin-top: -4px; }
.dlg-body label { line-height: 13px; }
.thin { height: 21px; border-color: #666; }
.thin input { font: 16px "Liberation Sans", Arial, sans-serif; }
.thin select { font: 11px "Liberation Sans", Arial, sans-serif; }
.dlg-foot { display: flex; gap: 17px; padding: 49px 0 0 101px; }
.dlg-foot .push { width: 73px; height: 21px; line-height: 18px; }
.pointer { position: absolute; left: 92px; top: 57px; }
```
